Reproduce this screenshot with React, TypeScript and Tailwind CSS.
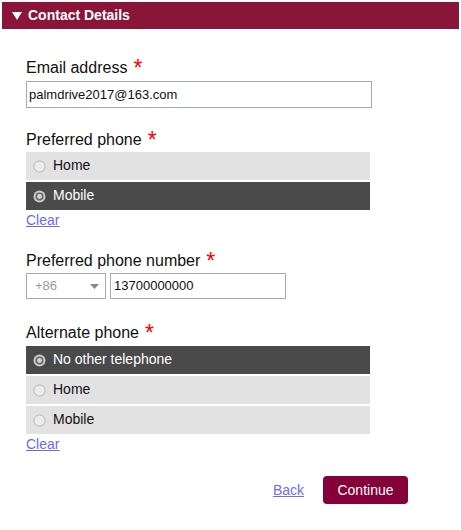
import React from "react";

function Radio({ checked }: { checked: boolean }) {
  return checked ? (
    <svg width="13" height="13" viewBox="0 0 13 13" className="shrink-0">
      <circle cx="6.5" cy="6.5" r="6" fill="#c9c9c9" />
      <circle cx="6.5" cy="6.5" r="4" fill="#6a6a6a" />
      <circle cx="6.5" cy="6.5" r="2.4" fill="#d6d6d6" />
    </svg>
  ) : (
    <svg width="13" height="13" viewBox="0 0 13 13" className="shrink-0">
      <circle cx="6.5" cy="6.5" r="5.6" fill="#ececec" stroke="#b4b4b4" strokeWidth="1" />
    </svg>
  );
}

function Row({ label, checked }: { label: string; checked: boolean }) {
  return (
    <div
      className={`flex h-[28px] w-[344px] items-center pl-[7px] ${
        checked ? "bg-[#4a4a4a] text-white" : "bg-[#e2e2e2] text-[#111]"
      }`}
    >
      <Radio checked={checked} />
      <span className="ml-[7px] pb-[2px] text-[14px] leading-none">{label}</span>
    </div>
  );
}

function Label({ text }: { text: string }) {
  return (
    <div className="flex h-[18px] items-start text-[16px] leading-[18px] text-[#111]">
      <span className="relative top-[1px]">{text}</span>
      <span className="relative top-[1px] ml-[6px] text-[23px] leading-[18px] text-[#ff0000]">*</span>
    </div>
  );
}

export default function App() {
  return (
    <div
      className="h-[530px] w-[461px] bg-white"
      style={{ fontFamily: '"Liberation Sans", Arial, sans-serif' }}
    >
      <div className="mx-[2px] mt-[2px] flex h-[27px] items-center bg-[#8a1538] pl-[10px] text-[14px] font-bold text-white">
        <svg width="10" height="8" viewBox="0 0 10 8" className="shrink-0">
          <path d="M0 0 L10 0 L5 8 Z" fill="#fff" />
        </svg>
        <span className="ml-[6px]">Contact Details</span>
      </div>

      <div className="pl-[26px]">
        <div className="mt-[29px]">
          <Label text="Email address" />
          <div className="mt-[5px] flex h-[27px] w-[346px] items-center border border-[#a9a9a9] pl-[2px] text-[13px] text-[#111]">
            palmdrive2017@163.com
          </div>
        </div>

        <div className="mt-[22px]">
          <Label text="Preferred phone" />
          <div className="mt-[4px] flex flex-col gap-[2px]">
            <Row label="Home" checked={false} />
            <Row label="Mobile" checked={true} />
          </div>
          <a className="mt-[2px] block h-[16px] w-fit text-[14px] leading-[16px] text-[#6b6bf5] underline">Clear</a>
        </div>

        <div className="mt-[23px]">
          <Label text="Preferred phone number" />
          <div className="mt-[4px] flex gap-[4px]">
            <div className="flex h-[26px] w-[80px] items-center justify-between border border-[#a9a9a9] pl-[8px] pr-[6px] text-[13px] text-[#999]">
              <span>+86</span>
              <svg width="9" height="5" viewBox="0 0 9 5">
                <path d="M0 0 L9 0 L4.5 5 Z" fill="#888" />
              </svg>
            </div>
            <div className="flex h-[26px] w-[176px] items-center border border-[#a9a9a9] pl-[3px] text-[13px] text-[#111]">
              13700000000
            </div>
          </div>
        </div>

        <div className="mt-[24px]">
          <Label text="Alternate phone" />
          <div className="mt-[5px] flex flex-col gap-[2px]">
            <Row label="No other telephone" checked={true} />
            <Row label="Home" checked={false} />
            <Row label="Mobile" checked={false} />
          </div>
          <a className="mt-[2px] block h-[16px] w-fit text-[14px] leading-[16px] text-[#6b6bf5] underline">Clear</a>
        </div>

        <div className="mt-[24px] flex w-[382px] items-center justify-end">
          <a className="text-[14px] text-[#6b6bf5] underline">Back</a>
          <button className="ml-[19px] h-[28px] w-[85px] rounded-[4px] bg-[#850038] text-[14px] text-white">
            Continue
          </button>
        </div>
      </div>
    </div>
  );
}
